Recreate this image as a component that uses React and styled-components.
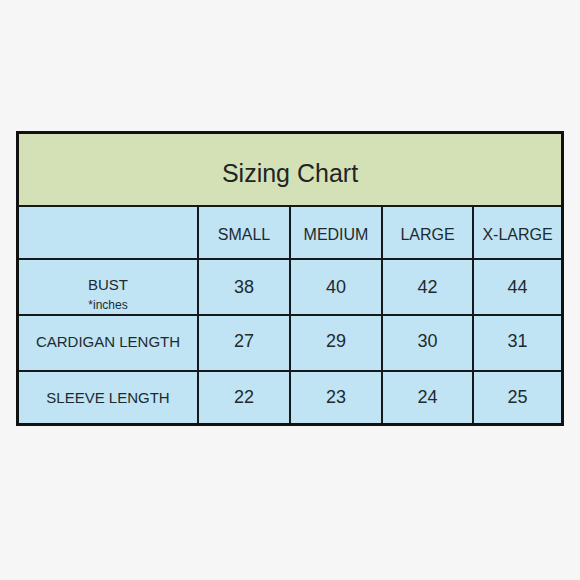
import React from "react";
import styled, { createGlobalStyle } from "styled-components";

const sizes = ["SMALL", "MEDIUM", "LARGE", "X-LARGE"];

const rows = [
  { label: "BUST", note: "*inches", values: [38, 40, 42, 44] },
  { label: "CARDIGAN LENGTH", values: [27, 29, 30, 31], lift: 3 },
  { label: "SLEEVE LENGTH", values: [22, 23, 24, 25] },
];

const GlobalStyle = createGlobalStyle`
  html, body {
    margin: 0;
    padding: 0;
    background: #f6f6f6;
  }
  body {
    font-family: "Liberation Sans", Arial, sans-serif;
    color: #1d2a30;
  }
`;

const Page = styled.div`
  width: 580px;
  height: 580px;
  box-sizing: border-box;
  padding-top: 131px;
  display: flex;
  justify-content: center;
  align-items: flex-start;
`;

const Chart = styled.div`
  display: grid;
  grid-template-columns: 178px 90px 90px 89px 87px;
  grid-template-rows: 71px 51px 54px 54px 51px;
  gap: 2px;
  background: #15191b;
  border: 3px solid #111;
`;

const Title = styled.div`
  grid-column: 1 / -1;
  background: #d4e1b7;
  display: flex;
  align-items: center;
  justify-content: center;
  padding-top: 8px;
  box-sizing: border-box;
  font-size: 25px;
  color: #1f2424;
`;

const Cell = styled.div`
  background: #c0e4f4;
  display: flex;
  align-items: center;
  justify-content: center;
  box-sizing: border-box;
  font-size: ${(p) => (p.$number ? "18px" : "15px")};
  padding-bottom: ${(p) => p.$lift || 0}px;
  color: #1d2a30;
`;

const HeadCell = styled(Cell)`
  font-size: 16px;
  padding-top: 4px;
`;

const LabelCell = styled(Cell)`
  flex-direction: column;
  justify-content: ${(p) => (p.$top ? "flex-start" : "center")};
  padding-top: ${(p) => (p.$top ? "16px" : "0")};
  line-height: 18px;
`;

const Note = styled.span`
  font-size: 12px;
  line-height: 14px;
  margin-top: 4px;
`;

export default function App() {
  return (
    <>
      <GlobalStyle />
      <Page>
        <Chart>
          <Title>Sizing Chart</Title>
          <HeadCell />
          {sizes.map((s) => (
            <HeadCell key={s}>{s}</HeadCell>
          ))}
          {rows.map((r) => (
            <React.Fragment key={r.label}>
              <LabelCell $top={!!r.note} $lift={r.lift}>
                <span>{r.label}</span>
                {r.note && <Note>{r.note}</Note>}
              </LabelCell>
              {r.values.map((v, i) => (
                <Cell key={i} $number $lift={r.lift}>
                  {v}
                </Cell>
              ))}
            </React.Fragment>
          ))}
        </Chart>
      </Page>
    </>
  );
}
